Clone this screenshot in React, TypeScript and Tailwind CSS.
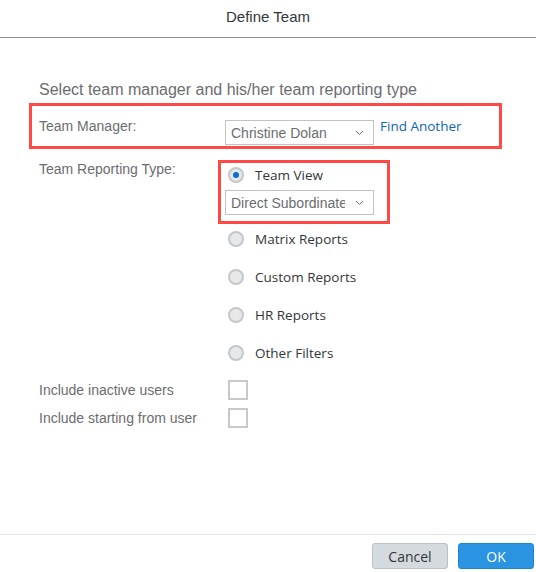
import React from 'react';

function Chevron() {
  return (
    <svg width="9" height="6" viewBox="0 0 9 6" className="shrink-0">
      <path d="M1 1l3.5 3.5L8 1" fill="none" stroke="#6a6d70" strokeWidth="1" />
    </svg>
  );
}

function Select({ value }: { value: string }) {
  return (
    <div className="flex items-center w-[149px] h-[25px] border border-[#c2c2c2] bg-white pl-[5px] pr-[9px]">
      <span className="flex-1 overflow-hidden whitespace-nowrap text-[14px] leading-[18px] text-[#6a6d70]">{value}</span>
      <span className="ml-[10px]"><Chevron /></span>
    </div>
  );
}

function Radio({ checked, label }: { checked?: boolean; label: string }) {
  return (
    <div className="flex items-center h-[18px]">
      <span className="flex items-center justify-center w-[16px] h-[16px] rounded-full border-2 border-[#c4c7c9] bg-[#e6e8ea]">
        {checked && <span className="w-[6px] h-[6px] rounded-full bg-[#0a6ed1]" />}
      </span>
      <span className="ml-[11px] text-[13.5px] leading-[18px] text-[#32363a] font-['Open_Sans',sans-serif]">{label}</span>
    </div>
  );
}

function CheckRow({ label }: { label: string }) {
  return (
    <div className="flex items-center h-[28px]">
      <span className="w-[189px] text-[14px] leading-[18px] text-[#6a6d70]">{label}</span>
      <span className="w-[20px] h-[20px] border-2 border-[#c8c8c8] bg-white" />
    </div>
  );
}

export default function App() {
  return (
    <div className="w-[536px] h-[572px] flex flex-col bg-white font-['Liberation_Sans',Arial,sans-serif]">
      {/* Header */}
      <div className="h-[38px] shrink-0 flex items-center justify-center border-b border-[#8e8e8e] pb-[3px]">
        <span className="text-[15px] text-[#32363a]">Define Team</span>
      </div>

      {/* Body */}
      <div className="flex-1 pl-[29px]">
        <div className="mt-[42px] pl-[10px] text-[16px] leading-[20px] text-[#6a6d70]">
          Select team manager and his/her team reporting type
        </div>

        {/* Team manager box */}
        <div className="mt-[3px] w-[473px] h-[46px] border-[3px] border-[#ff4848] flex items-start">
          <div className="w-[193px] pl-[7px] pt-[11px] text-[14px] leading-[18px] text-[#6a6d70]">Team Manager:</div>
          <div className="pt-[14px]">
            <Select value="Christine Dolan" />
          </div>
          <a className="ml-[6px] pt-[11px] text-[13.5px] leading-[18px] text-[#0e65b5] font-['Open_Sans',sans-serif]">Find Another</a>
        </div>

        {/* Reporting type */}
        <div className="mt-[11px] flex items-start">
          <div className="w-[189px] pl-[10px] text-[14px] leading-[18px] text-[#6a6d70]">Team Reporting Type:</div>
          <div className="flex flex-col">
            <div className="w-[172px] h-[64px] border-[3px] border-[#ff4848] pt-[3px]">
              <div className="pl-[7px]">
                <Radio checked label="Team View" />
              </div>
              <div className="mt-[6px] pl-[4px]">
                <Select value="Direct Subordinate" />
              </div>
            </div>
            <div className="pl-[10px] mt-[6px] flex flex-col gap-[20px]">
              <Radio label="Matrix Reports" />
              <Radio label="Custom Reports" />
              <Radio label="HR Reports" />
              <Radio label="Other Filters" />
            </div>
          </div>
        </div>

        <div className="mt-[14px] pl-[10px] flex flex-col">
          <CheckRow label="Include inactive users" />
          <CheckRow label="Include starting from user" />
        </div>
      </div>

      {/* Footer */}
      <div className="h-[38px] shrink-0 border-t border-[#e4e4e4] flex items-start justify-end gap-[10px] pr-[2px] pt-[8px]">
        <button className="w-[76px] h-[26px] rounded-[3px] border border-[#b9c0c6] bg-[#d5dadf] text-[14px] text-[#32363a] font-['Open_Sans',sans-serif]">
          Cancel
        </button>
        <button className="w-[76px] h-[26px] rounded-[3px] border border-[#1c86d6] bg-[#2a93e2] text-[14px] text-white font-['Open_Sans',sans-serif]">
          OK
        </button>
      </div>
    </div>
  );
}
